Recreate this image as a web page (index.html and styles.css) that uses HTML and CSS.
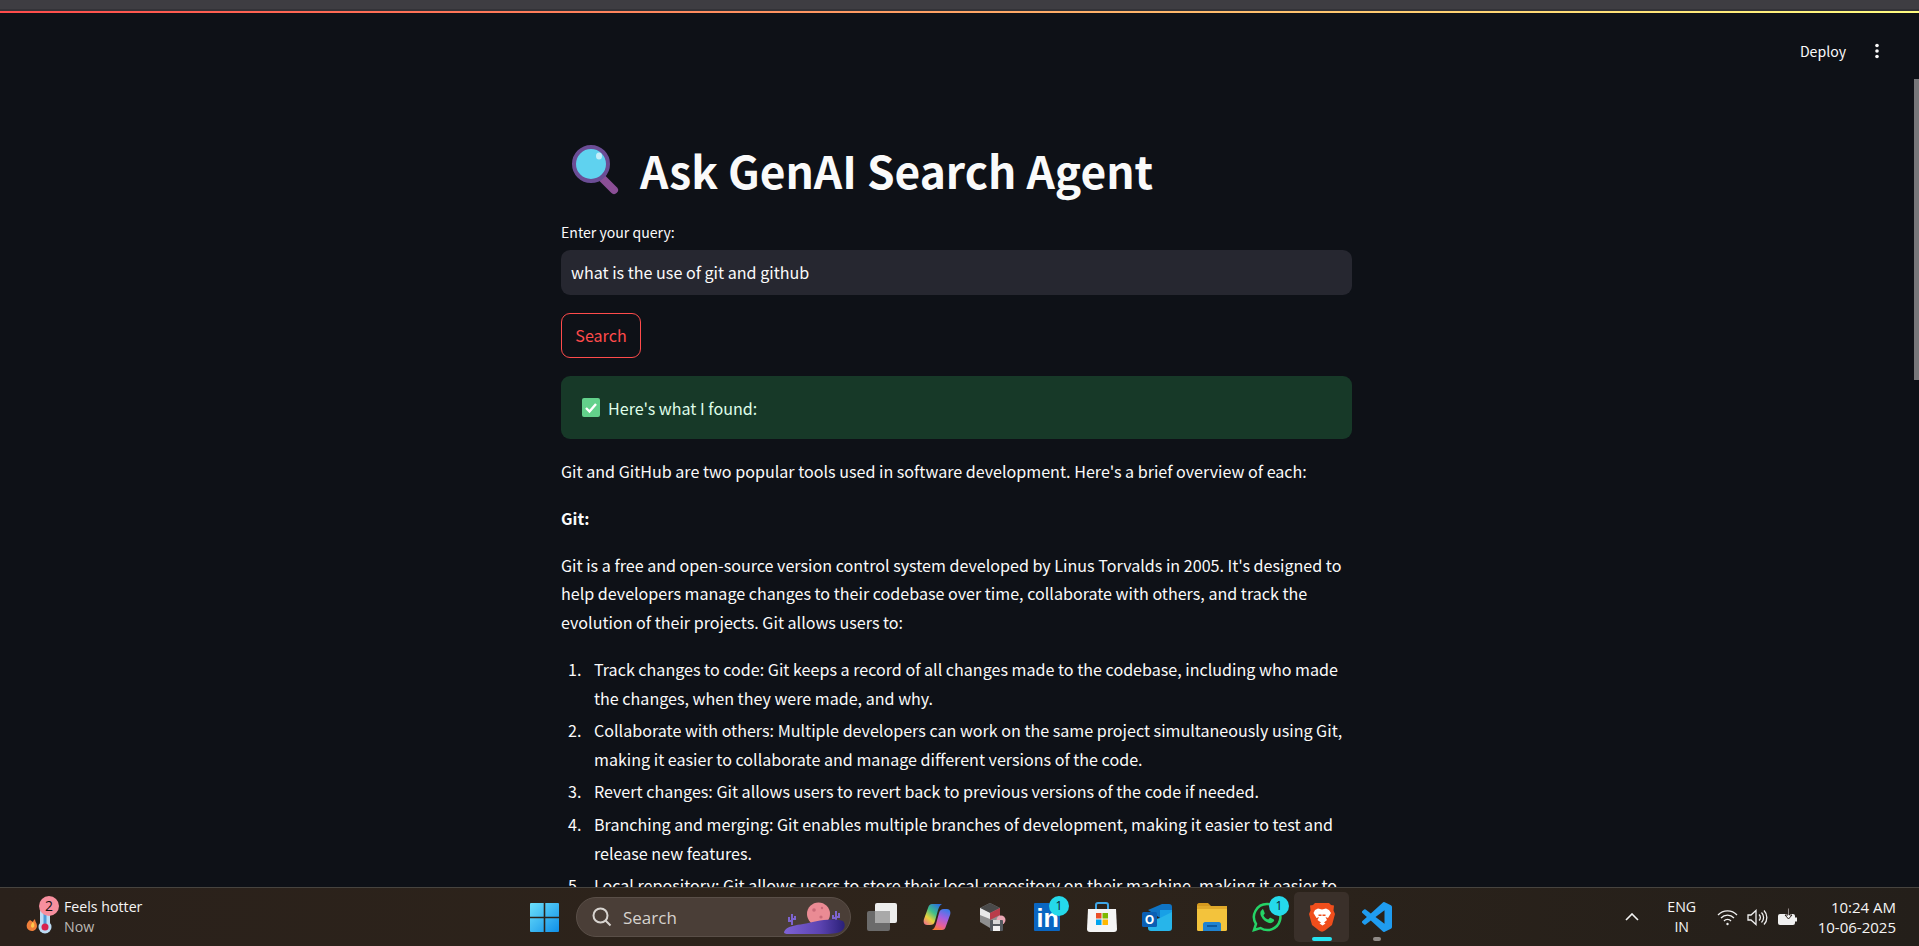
FILE: index.html
```html
<!DOCTYPE html>
<html lang="en">
<head>
    <meta charset="UTF-8">
    <title>Ask GenAI Search Agent</title>
    <link rel="stylesheet" href="styles.css">
</head>
<body>
<div class="shell">
    <div class="top-strip"></div>
    <div class="progress"></div>

    <div class="app">
        <div class="app-main">
            <div class="app-header">
                <span class="deploy">Deploy</span>
                <svg class="kebab" width="6" height="16" viewBox="0 0 6 16"><circle cx="3" cy="2.5" r="1.8"/><circle cx="3" cy="8" r="1.8"/><circle cx="3" cy="13.5" r="1.8"/></svg>
            </div>

            <div class="content">
                <h1 class="title">
                    <svg class="title-icon" width="50" height="50" viewBox="0 0 50 50">
                        <line x1="31" y1="32" x2="44" y2="45" stroke="#8b4f96" stroke-width="8" stroke-linecap="round"/>
                        <circle cx="21" cy="19" r="17" fill="#5fd2ef" stroke="#6b4d95" stroke-width="4"/>
                        <ellipse cx="29" cy="11" rx="3" ry="3.5" fill="#c5eefa"/>
                    </svg>
                    Ask GenAI Search Agent
                </h1>

                <label class="field-label">Enter your query:</label>
                <div class="text-input">what is the use of git and github</div>
                <button class="search-btn">Search</button>

                <div class="alert">
                    <svg width="18" height="19" viewBox="0 0 18 19"><rect width="18" height="19" rx="2" fill="#63d18b"/><path d="M4 10l3.5 3.5L14 6" fill="none" stroke="#fff" stroke-width="2.4"/></svg>
                    <span>Here's what I found:</span>
                </div>

                <div class="answer">
                    <p>Git and GitHub are two popular tools used in software development. Here's a brief overview of each:</p>
                    <p><strong>Git:</strong></p>
                    <p>Git is a free and open-source version control system developed by Linus Torvalds in 2005. It's designed to help developers manage changes to their codebase over time, collaborate with others, and track the evolution of their projects. Git allows users to:</p>
                    <ol>
                        <li>Track changes to code: Git keeps a record of all changes made to the codebase, including who made the changes, when they were made, and why.</li>
                        <li>Collaborate with others: Multiple developers can work on the same project simultaneously using Git, making it easier to collaborate and manage different versions of the code.</li>
                        <li>Revert changes: Git allows users to revert back to previous versions of the code if needed.</li>
                        <li>Branching and merging: Git enables multiple branches of development, making it easier to test and release new features.</li>
                        <li>Local repository: Git allows users to store their local repository on their machine, making it easier to work offline.</li>
                    </ol>
                </div>
            </div>
        </div>
        <div class="scroll-track"><div class="scroll-thumb"></div></div>
    </div>

    <div class="taskbar">
        <div class="tb-left">
            <div class="weather-icon">
                <svg width="32" height="42" viewBox="0 0 32 42">
                    <path d="M5 24c-3 2-4 5-3 8 1 2 3 3 5 3s5-2 5-5c0-3-2-4-2-7-1 1-2 2-2 3-1-1-2-1-3-2z" fill="#ef7f3a"/>
                    <path d="M6 30c0-2 1-3 2-4 1 2 2 3 1 5-1 1-3 1-3-1z" fill="#ffc74d"/>
                    <rect x="15" y="12" width="10" height="22" fill="#bcdcf5" rx="4"/>
                    <circle cx="20" cy="31" r="6.5" fill="#bcdcf5"/>
                    <rect x="18.5" y="14" width="3" height="16" fill="#4d9ad8"/>
                    <circle cx="20" cy="31" r="3.5" fill="#d8224f"/>
                </svg>
                <span class="weather-badge">2</span>
            </div>
            <div class="weather-text">
                <span>Feels hotter</span>
                <span class="dim">Now</span>
            </div>
        </div>

        <div class="tb-center">
            <svg class="win-logo" width="29" height="29" viewBox="0 0 29 29">
                <defs><linearGradient id="wg" x1="0" y1="0" x2="1" y2="1"><stop offset="0" stop-color="#6ce0fb"/><stop offset="1" stop-color="#0f8fe8"/></linearGradient></defs>
                <path d="M1 0h12.7v13.7H0V1a1 1 0 0 1 1-1zM15.3 0H28a1 1 0 0 1 1 1v12.7H15.3zM0 15.3h13.7V29H1a1 1 0 0 1-1-1zM15.3 15.3H29V28a1 1 0 0 1-1 1H15.3z" fill="url(#wg)"/>
            </svg>

            <div class="search-pill">
                <svg width="20" height="20" viewBox="0 0 20 20" fill="none" stroke="#d8d4d0" stroke-width="2"><circle cx="8.5" cy="8.5" r="7"/><path d="M13.5 13.5l5 5"/></svg>
                <span class="pill-label">Search</span>
                <svg class="pill-art" width="64" height="36" viewBox="0 0 64 36">
                    <defs><linearGradient id="hill" x1="0" y1="0" x2="1" y2="0"><stop offset="0" stop-color="#7f63d6"/><stop offset=".6" stop-color="#5b43b0"/><stop offset="1" stop-color="#2a2078"/></linearGradient></defs>
                    <circle cx="36.500" cy="15" r="11.500" fill="#ea8b94"/>
                    <circle cx="32" cy="11" r="1.800" fill="#c96a78"/><circle cx="40" cy="9" r="1.200" fill="#c96a78"/><circle cx="39" cy="18" r="1.600" fill="#c96a78"/>
                    <path d="M10 26V15M10 22H7v-4M10 20h3v-3M54 23V12M54 19h-3v-3M54 18h3v-4" stroke="#7d64cf" stroke-width="2" fill="none"/>
                    <path d="M2 33c2-6 13-7 19-8 11-2 26-7 40-3 3 3 2 9-3 11-6 2-12 2-22 2H8c-3 0-6 0-6-2z" fill="url(#hill)"/>
                </svg>
            </div>

            <div class="slot">
                <svg width="30" height="28" viewBox="0 0 30 28">
                    <rect x="0" y="8" width="23" height="20" rx="2" fill="#6b6b6b"/>
                    <rect x="8" y="0" width="22" height="20" rx="2" fill="#ededed"/>
                    <rect x="8" y="8" width="15" height="12" fill="#a9a9a9"/>
                </svg>
            </div>
            <div class="slot">
                <svg width="28" height="28" viewBox="0 0 28 28">
                    <defs>
                        <linearGradient id="cp1" x1=".8" y1="0" x2=".1" y2="1"><stop offset="0" stop-color="#2a6fe0"/><stop offset=".4" stop-color="#3fbf8a"/><stop offset=".7" stop-color="#e8d23c"/><stop offset="1" stop-color="#ef6f8a"/></linearGradient>
                        <linearGradient id="cp2" x1=".7" y1="0" x2=".3" y2="1"><stop offset="0" stop-color="#3e7be8"/><stop offset=".4" stop-color="#a45fe0"/><stop offset=".75" stop-color="#e85f9a"/><stop offset="1" stop-color="#f47a3a"/></linearGradient>
                    </defs>
                    <path d="M9 1h10c-2 1-3 3-4 6l-3 11c-1 3-2 4-5 4H4c-3 0-4-3-3-6L5 5c1-3 2-4 4-4z" fill="url(#cp1)"/>
                    <path d="M19 27H9c2-1 3-3 4-6l3-11c1-3 2-4 5-4h3c3 0 4 3 3 6l-4 11c-1 3-2 4-4 4z" fill="url(#cp2)"/>
                </svg>
            </div>
            <div class="slot">
                <svg width="30" height="30" viewBox="0 0 30 30">
                    <path d="M3 6l10-5 10 5v14l-10 6-10-6z" fill="#8f8f8f"/>
                    <path d="M3 6l10 5 10-5-10-5z" fill="#4a4a4a"/>
                    <path d="M13 11l10-5v7l-10 5z" fill="#b93c4a"/>
                    <path d="M3 6l10 5v6L3 13z" fill="#e8e8e8"/>
                    <circle cx="24" cy="18" r="4.500" fill="#eaa6b4"/>
                    <rect x="13" y="18" width="13" height="11" rx="1" fill="#555a60"/>
                    <rect x="16" y="18" width="7" height="4" fill="#d8d8d8"/>
                    <rect x="16" y="24" width="7" height="5" fill="#f2f2f2"/>
                </svg>
            </div>
            <div class="slot">
                <svg width="26" height="28" viewBox="0 0 26 28"><rect width="26" height="28" fill="#0a66c2" rx="1"/><text x="2.500" y="24" class="in-text">in</text></svg>
                <span class="badge">1</span>
            </div>
            <div class="slot">
                <svg width="30" height="30" viewBox="0 0 30 30">
                    <path d="M9 7V3c0-1 1-2 2-2h8c1 0 2 1 2 2v4" fill="none" stroke="#3fa7e8" stroke-width="2"/>
                    <path d="M1 7h28l1 20c0 2-1 3-3 3H3c-2 0-3-1-3-3z" fill="#f5f5f5"/>
                    <rect x="9" y="11" width="5.500" height="5.500" fill="#ea4f28"/><rect x="15.500" y="11" width="5.500" height="5.500" fill="#7db900"/>
                    <rect x="9" y="17.500" width="5.500" height="5.500" fill="#00a4ee"/><rect x="15.500" y="17.500" width="5.500" height="5.500" fill="#ffb800"/>
                </svg>
            </div>
            <div class="slot">
                <svg width="30" height="27" viewBox="0 0 30 27">
                    <path d="M6 6l14-6h7c2 0 3 1 3 3v3L18 14z" fill="#0f74c4"/>
                    <path d="M18 6h12v8H18z" fill="#18a0e6"/>
                    <path d="M6 17l12-3 12-6v16c0 2-1 3-3 3H9c-2 0-3-1-3-3z" fill="#27b5ea"/>
                    <rect x="0" y="8" width="15" height="15" rx="1.500" fill="#0a5fb4"/>
                    <text x="7.500" y="20" class="o-text">O</text>
                </svg>
            </div>
            <div class="slot">
                <svg width="30" height="28" viewBox="0 0 30 28">
                    <path d="M0 2c0-1 1-2 2-2h9l4 4H0z" fill="#d4991f"/>
                    <rect x="0" y="3" width="30" height="25" rx="1.500" fill="#f3c33c"/>
                    <rect x="0" y="3" width="30" height="3" fill="#e0a92a"/>
                    <path d="M6 28v-7c0-1 1-2 2-2h14c1 0 2 1 2 2v7z" fill="#1f83d0"/>
                    <rect x="10" y="22" width="10" height="2" fill="#0c5a9e"/>
                </svg>
            </div>
            <div class="slot">
                <svg width="30" height="30" viewBox="0 0 30 30">
                    <path d="M15 2a13 13 0 0 0-11 20L2 28l6.500-2A13 13 0 1 0 15 2z" fill="none" stroke="#25d366" stroke-width="2.500"/>
                    <path d="M10 8c-2 1-2 4-1 6 2 4 5 6 8 7 2 .5 4-.5 5-2 .3-1 0-1.500-1-2l-2-1c-1-.5-1.500 0-2 .7-.5.700-1 .8-2 .2-2-1-3-2.500-3.500-3.500 0-.5.500-1 1-1.500.3-.5.3-1 0-1.500l-1-2.500c-.5-.8-1.200-.5-1.500-.4z" fill="#25d366"/>
                </svg>
                <span class="badge">1</span>
            </div>
            <div class="slot slot-active">
                <svg width="26" height="30" viewBox="0 0 26 30">
                    <path d="M6 1h14l2 2 3 .5-.5 5L26 12l-3 11-7 5.500c-2 1.500-4 1.500-6 0L3 23 0 12l1.500-3.500-.5-5L4 3z" fill="#f04e1c"/>
                    <path d="M6 8l3-1.500 4 1 4-1L20 8l2 3-3 5-2.500-1 1.500 3-3 2.500 1.500 1-3 2-3-2 1.500-1L8.500 18l1.500-3-2.500 1-3-5z" fill="#fff"/>
                    <path d="M9.500 12.500h3v1.500h-3zM13.500 12.500h3v1.500h-3z" fill="#f04e1c"/>
                </svg>
                <span class="active-line"></span>
            </div>
            <div class="slot">
                <svg width="30" height="30" viewBox="0 0 24 24"><path d="M23.150 2.587L18.210.21a1.494 1.494 0 0 0-1.705.29l-9.460 8.630-4.120-3.128a.999.999 0 0 0-1.276.057L.327 7.261A1 1 0 0 0 .326 8.740L3.899 12 .326 15.260a1 1 0 0 0 .001 1.479L1.650 17.940a.999.999 0 0 0 1.276.057l4.120-3.128 9.460 8.630a1.492 1.492 0 0 0 1.704.29l4.942-2.377A1.500 1.500 0 0 0 24 20.060V3.939a1.500 1.500 0 0 0-.85-1.352zm-5.146 14.861L10.826 12l7.178-5.448v10.896z" fill="#1f9cf0"/></svg>
                <span class="open-dot"></span>
            </div>
        </div>

        <div class="tb-right">
            <svg class="chevron" width="14" height="8" viewBox="0 0 14 8"><path d="M1 7l6-6 6 6" fill="none" stroke="#f4f4f4" stroke-width="1.600"/></svg>
            <div class="lang"><span>ENG</span><span>IN</span></div>
            <div class="tray">
                <svg width="21" height="17" viewBox="0 0 21 17" fill="none" stroke="#f0f0f0" stroke-width="1.300"><path d="M1 6a13 13 0 0 1 19 0M4 9a9 9 0 0 1 13 0M7 12a4.500 4.500 0 0 1 7 0"/><circle cx="10.500" cy="15" r="1.200" fill="#f0f0f0" stroke="none"/></svg>
                <svg width="21" height="17" viewBox="0 0 21 17" fill="none" stroke="#f0f0f0" stroke-width="1.300"><path d="M1 6h3l5-4.500v14L4 11H1z"/><path d="M12 5.500a4 4 0 0 1 0 6M14.500 3.500a7 7 0 0 1 0 10M17 1.500a10 10 0 0 1 0 14"/></svg>
                <svg width="20" height="18" viewBox="0 0 20 18"><path d="M3 6h13a2 2 0 0 1 2 2v7a2 2 0 0 1-2 2H3a2 2 0 0 1-2-2V8a2 2 0 0 1 2-2z" fill="#f0f0f0"/><path d="M18 9.500h2v4h-2z" fill="#f0f0f0"/><path d="M11 0v7H8l3.500 4L15 7h-2.500V0z" fill="#f0f0f0" stroke="#2a211c" stroke-width="1"/></svg>
            </div>
            <div class="clock"><span>10:24 AM</span><span>10-06-2025</span></div>
        </div>
    </div>
</div>
</body>
</html>
```

FILE: styles.css
```css
* {
    box-sizing: border-box;
}

html, body {
    margin: 0;
    padding: 0;
    height: 100%;
    overflow: hidden;
}

body {
    background-color: #0e1117;
    color: #fafafa;
    font-family: "Noto Sans CJK JP", "Noto Sans", sans-serif;
}

.shell {
    height: 946px;
    display: flex;
    flex-direction: column;
}

.top-strip {
    height: 11px;
    flex: none;
    background-color: #3e3d42;
    border-bottom: 2px solid #333338;
}

.progress {
    height: 2px;
    flex: none;
    background: linear-gradient(90deg, #ff4b4b, #fffd80);
}

.app {
    flex: 1;
    min-height: 0;
    display: flex;
    overflow: hidden;
}

.app-main {
    flex: 1;
    min-width: 0;
    padding-right: 1px;
    display: flex;
    flex-direction: column;
}

.app-header {
    flex: none;
    height: 95px;
    padding: 27px 33px 0 0;
    display: flex;
    justify-content: flex-end;
    align-items: flex-start;
    gap: 28px;
}

.deploy {
    font-size: 14.1px;
    line-height: 22px;
}

.kebab {
    margin-top: 3px;
    fill: #fafafa;
}

.content {
    width: 791px;
    margin: 0 auto;
}

.title {
    margin: 0;
    height: 124px;
    display: flex;
    align-items: center;
    font-size: 44.3px;
    font-weight: 700;
    line-height: 60px;
    gap: 20px;
    padding: 0 0 0 9px;
}

.title-icon {
    flex: none;
}

.field-label {
    display: block;
    font-size: 14.1px;
    line-height: 22px;
    margin-top: -11px;
    margin-bottom: 7px;
}

.text-input {
    height: 45px;
    padding: 0 10px;
    background-color: #262730;
    border-radius: 9px;
    font-size: 16.1px;
    line-height: 45px;
}

.search-btn {
    display: block;
    margin-top: 18px;
    height: 45px;
    width: 80px;
    padding: 0 0 2px;
    background: transparent;
    border: 1px solid #ff4b4b;
    border-radius: 9px;
    color: #ff4b4b;
    font-family: inherit;
    font-size: 16.1px;
}

.alert {
    margin-top: 18px;
    height: 63px;
    padding: 0 21px;
    display: flex;
    align-items: center;
    gap: 8px;
    background-color: #173928;
    border-radius: 9px;
    color: #dffde9;
    font-size: 16.1px;
}

.answer {
    margin-top: 18px;
    font-size: 16.1px;
    line-height: 28.8px;
}

.answer p {
    margin: 0 0 18px;
}

.answer ol {
    margin: 0;
    padding-left: 24px;
}

.answer li {
    margin-bottom: 3.6px;
    padding-left: 9px;
}

.scroll-track {
    flex: none;
    width: 5px;
    padding-top: 66px;
}

.scroll-thumb {
    height: 301px;
    background-color: #77777a;
}

/* taskbar */
.taskbar {
    flex: none;
    height: 59px;
    display: flex;
    align-items: center;
    background: linear-gradient(90deg, #2a211b, #2e241b 50%, #241f1a);
    border-top: 1px solid #47443f;
    font-family: "Open Sans", "Noto Sans", sans-serif;
    font-size: 14.2px;
    color: #f5f5f5;
}

.tb-left {
    width: 530px;
    flex: none;
    padding-left: 25px;
    display: flex;
    align-items: center;
}

.weather-icon {
    position: relative;
    width: 39px;
    height: 42px;
}

.weather-badge {
    position: absolute;
    left: 14px;
    top: 0;
    width: 20px;
    height: 20px;
    border-radius: 50%;
    background-color: #f78f9e;
    color: #111;
    font-size: 14px;
    line-height: 20px;
    text-align: center;
}

.weather-text {
    display: flex;
    flex-direction: column;
    line-height: 20px;
}

.dim {
    color: #bdb9b5;
}

.tb-center {
    flex: 1;
    display: flex;
    align-items: center;
}

.win-logo {
    margin-right: 17px;
}

.search-pill {
    width: 275px;
    height: 40px;
    margin-right: 3px;
    padding: 0 4px 0 15px;
    display: flex;
    align-items: center;
    background-color: #4a3e37;
    border: 1px solid #5a4f48;
    border-radius: 20px;
    font-size: 17px;
    color: #d6d2ce;
}

.pill-label {
    margin-left: 11px;
    flex: 1;
}

.slot {
    position: relative;
    width: 55px;
    height: 50px;
    display: flex;
    align-items: center;
    justify-content: center;
}

.slot-active {
    background-color: #3a302a;
    border-radius: 5px;
}

.badge {
    position: absolute;
    left: 30px;
    top: 4px;
    width: 20px;
    height: 20px;
    border-radius: 50%;
    background-color: #25d9ea;
    color: #10202a;
    font-size: 12px;
    line-height: 20px;
    text-align: center;
}

.active-line {
    position: absolute;
    left: 18px;
    bottom: 1px;
    width: 20px;
    height: 4px;
    border-radius: 2px;
    background-color: #25e2f0;
}

.open-dot {
    position: absolute;
    left: 24px;
    bottom: 1px;
    width: 8px;
    height: 4px;
    border-radius: 2px;
    background-color: #8f8a86;
}

.in-text {
    font-family: "Liberation Sans", sans-serif;
    font-weight: 700;
    font-size: 25px;
    fill: #fff;
}

.o-text {
    font-family: "Open Sans", sans-serif;
    font-weight: 700;
    font-size: 12px;
    fill: #fff;
    text-anchor: middle;
}

.tb-right {
    flex: none;
    display: flex;
    align-items: center;
    padding-right: 23px;
}

.chevron {
    margin-right: 26px;
}

.lang {
    display: flex;
    flex-direction: column;
    align-items: center;
    line-height: 20px;
    width: 34px;
    margin-right: 18px;
}

.tray {
    display: flex;
    align-items: center;
    gap: 9px;
    margin-right: 21px;
}

.clock {
    display: flex;
    flex-direction: column;
    align-items: flex-end;
    font-size: 15px;
    line-height: 20px;
}
```
